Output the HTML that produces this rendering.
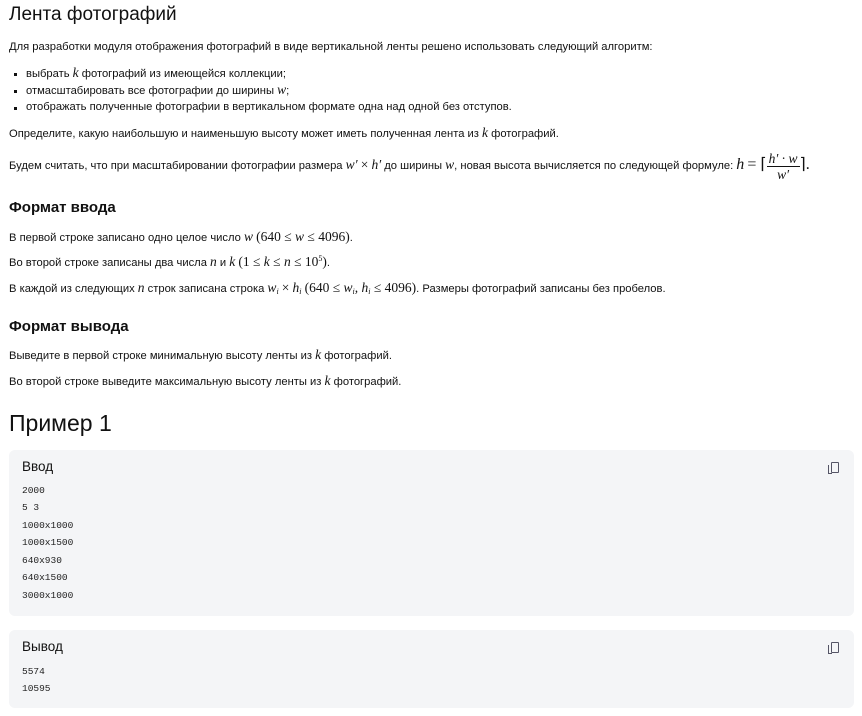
<!DOCTYPE html>
<html><head><meta charset="utf-8"><style>
body{margin:0;width:862px;height:716px;background:#fff;font-family:"Liberation Sans","Noto Sans CJK SC",sans-serif;color:#111;position:relative;overflow:hidden}
.a{position:absolute;left:9px;white-space:nowrap;font-size:11.2px;line-height:14px}
.m{font-family:"Liberation Serif",serif;font-style:italic;font-size:13.5px}
.r{font-family:"Liberation Serif",serif;font-size:13.5px}
.s{font-size:8px;line-height:0;vertical-align:-2px}
.u{font-size:8px;line-height:0;vertical-align:5px}
.h{font-size:15px;font-weight:bold;line-height:18px}
.box{position:absolute;left:9px;width:845px;background:#f4f5f7;border-radius:6px}
.c{position:absolute;left:22px;font-family:"Liberation Mono",monospace;font-size:9.5px;line-height:12px;color:#222}
.lbl{position:absolute;left:22px;font-size:13.5px;line-height:16px}
.cp{position:absolute;left:831px;width:6px;height:9px;border:1.5px solid #556;border-radius:1px}
.cp:before{content:"";position:absolute;left:-4px;top:2px;width:3px;height:8px;border-left:1.5px solid #556;border-bottom:1.5px solid #556}
.dot{position:absolute;left:0;top:7px;width:2.5px;height:2.5px;background:#111}
.li{padding-left:12px}
.fr{display:inline-block;vertical-align:middle;text-align:center;line-height:15px}
.fr .n{border-bottom:1px solid #111;padding:0 2px}
</style></head><body>
<div class="a" style="top:3px;font-size:19px;line-height:24px">Лента фотографий</div>
<div class="a" style="top:40px">Для разработки модуля отображения фотографий в виде вертикальной ленты решено использовать следующий алгоритм:</div>
<div class="a li" style="top:66px;left:14px"><span class="dot"></span>выбрать <span class="m">k</span> фотографий из имеющейся коллекции;</div>
<div class="a li" style="top:83px;left:14px"><span class="dot"></span>отмасштабировать все фотографии до ширины <span class="m">w</span>;</div>
<div class="a li" style="top:100px;left:14px"><span class="dot"></span>отображать полученные фотографии в вертикальном формате одна над одной без отступов.</div>
<div class="a" style="top:126px">Определите, какую наибольшую и наименьшую высоту может иметь полученная лента из <span class="m">k</span> фотографий.</div>
<div class="a" style="top:143px;line-height:44px">Будем считать, что при масштабировании фотографии размера <span class="m">w′</span> <span class="r">×</span> <span class="m">h′</span> до ширины <span class="m">w</span>, новая высота вычисляется по следующей формуле: <span class="m" style="font-size:16px">h</span> <span class="r" style="font-size:16px">= ⌈</span><span class="fr"><span class="m n" style="display:block">h′ · w</span><span class="m" style="display:block">w′</span></span><span class="r" style="font-size:16px">⌉.</span></div>
<div class="a h" style="top:199px">Формат ввода</div>
<div class="a" style="top:230px">В первой строке записано одно целое число <span class="m">w</span> <span class="r">(640 ≤ </span><span class="m">w</span><span class="r"> ≤ 4096)</span>.</div>
<div class="a" style="top:255px">Во второй строке записаны два числа <span class="m">n</span> и <span class="m">k</span> <span class="r">(1 ≤ </span><span class="m">k</span><span class="r"> ≤ </span><span class="m">n</span><span class="r"> ≤ 10<span class="u">5</span>)</span>.</div>
<div class="a" style="top:281px">В каждой из следующих <span class="m">n</span> строк записана строка <span class="m">w<span class="s">i</span></span> <span class="r">×</span> <span class="m">h<span class="s">i</span></span> <span class="r">(640 ≤ </span><span class="m">w<span class="s">i</span>, h<span class="s">i</span></span><span class="r"> ≤ 4096)</span>. Размеры фотографий записаны без пробелов.</div>
<div class="a h" style="top:318px">Формат вывода</div>
<div class="a" style="top:348px">Выведите в первой строке минимальную высоту ленты из <span class="m">k</span> фотографий.</div>
<div class="a" style="top:374px">Во второй строке выведите максимальную высоту ленты из <span class="m">k</span> фотографий.</div>
<div class="a" style="top:409px;font-size:23px;line-height:28px">Пример 1</div>
<div class="box" style="top:450px;height:166px"></div>
<div class="lbl" style="top:459px">Ввод</div>
<div class="cp" style="top:462px"></div>
<div class="c" style="top:485px">2000</div>
<div class="c" style="top:502px">5 3</div>
<div class="c" style="top:520px">1000x1000</div>
<div class="c" style="top:537px">1000x1500</div>
<div class="c" style="top:555px">640x930</div>
<div class="c" style="top:572px">640x1500</div>
<div class="c" style="top:590px">3000x1000</div>
<div class="box" style="top:630px;height:78px"></div>
<div class="lbl" style="top:639px">Вывод</div>
<div class="cp" style="top:642px"></div>
<div class="c" style="top:666px">5574</div>
<div class="c" style="top:683px">10595</div>
</body></html>
